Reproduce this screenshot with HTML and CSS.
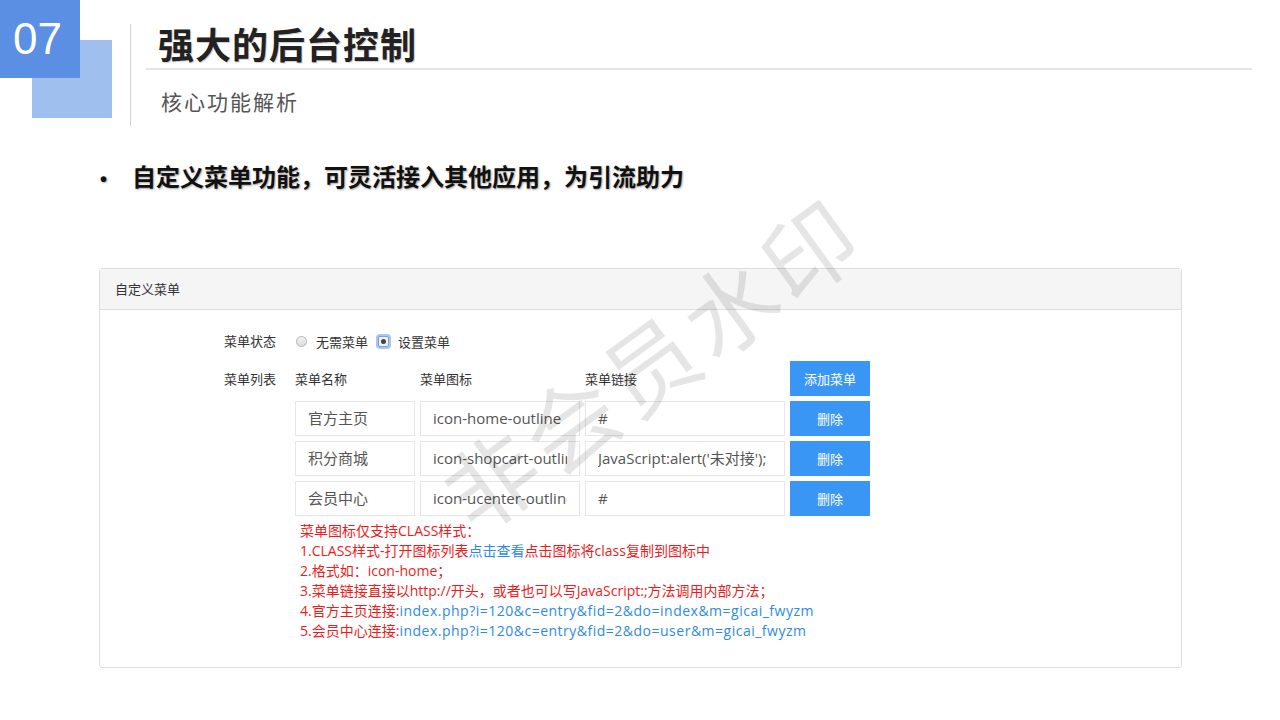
FILE: index.html
```html
<!DOCTYPE html>
<html lang="zh-CN">

<head>
    <meta charset="UTF-8">
    <meta name="viewport" content="width=device-width, initial-scale=1.0">
    <link rel="stylesheet" href="styles.css">
    <title>强大的后台控制</title>
</head>

<body>
    <header class="head">
        <div class="num"><span>07</span></div>
        <div class="vline"></div>
        <div class="titles">
            <h1 class="title">强大的后台控制</h1>
            <p class="sub">核心功能解析</p>
        </div>
    </header>

    <ul class="points">
        <li>自定义菜单功能，可灵活接入其他应用，为引流助力</li>
    </ul>

    <div class="panel">
        <div class="panel-head">自定义菜单</div>
        <div class="panel-body">
            <div class="form-row status">
                <label class="label">菜单状态</label>
                <div class="radios">
                    <span class="radio"></span><span class="radio-text">无需菜单</span>
                    <span class="radio checked"></span><span class="radio-text">设置菜单</span>
                </div>
            </div>

            <div class="form-row">
                <label class="label list-label">菜单列表</label>
                <div class="menu-grid">
                    <div class="col-head">菜单名称</div>
                    <div class="col-head">菜单图标</div>
                    <div class="col-head">菜单链接</div>
                    <button class="btn">添加菜单</button>

                    <div class="field"><span>官方主页</span></div>
                    <div class="field"><span>icon-home-outline</span></div>
                    <div class="field"><span>#</span></div>
                    <button class="btn">删除</button>

                    <div class="field"><span>积分商城</span></div>
                    <div class="field"><span>icon-shopcart-outline</span></div>
                    <div class="field"><span>JavaScript:alert('未对接');</span></div>
                    <button class="btn">删除</button>

                    <div class="field"><span>会员中心</span></div>
                    <div class="field"><span>icon-ucenter-outline</span></div>
                    <div class="field"><span>#</span></div>
                    <button class="btn">删除</button>
                </div>
            </div>

            <div class="notes">
                <p>菜单图标仅支持CLASS样式：</p>
                <p>1.CLASS样式-打开图标列表<a href="#">点击查看</a>点击图标将class复制到图标中</p>
                <p>2.格式如：icon-home；</p>
                <p>3.菜单链接直接以http://开头，或者也可以写JavaScript:;方法调用内部方法；</p>
                <p>4.官方主页连接:<a class="url" href="#">index.php?i=120&amp;c=entry&amp;fid=2&amp;do=index&amp;m=gicai_fwyzm</a></p>
                <p>5.会员中心连接:<a class="url" href="#">index.php?i=120&amp;c=entry&amp;fid=2&amp;do=user&amp;m=gicai_fwyzm</a></p>
            </div>
        </div>
    </div>

    <div class="watermark">非会员水印</div>
</body>

</html>
```

FILE: styles.css
```css
* {
    margin: 0;
    padding: 0;
    box-sizing: border-box;
}

body {
    width: 1280px;
    height: 720px;
    overflow: hidden;
    position: relative;
    background: #fff;
    font-family: "Noto Sans CJK SC", "Noto Sans", sans-serif;
    color: #333;
}

/* header */
.head {
    display: flex;
    align-items: flex-start;
}

.num {
    position: relative;
    width: 112px;
    height: 118px;
    flex-shrink: 0;
}

.num::before {
    content: "";
    position: absolute;
    left: 32px;
    top: 40px;
    width: 80px;
    height: 78px;
    background: #9fbfee;
}

.num span {
    position: absolute;
    left: 0;
    top: 0;
    width: 80px;
    height: 78px;
    background: #5b8fe3;
    color: #fff;
    font-family: "Liberation Sans", Arial, sans-serif;
    font-size: 44px;
    line-height: 78px;
    padding-left: 13px;
}

.vline {
    width: 1px;
    height: 102px;
    margin: 24px 0 0 18px;
    background: #d0d0d0;
}

.titles {
    flex: 1;
    margin: 0 28px 0 15px;
}

.title {
    margin-top: 21px;
    padding: 0 0 3px 12px;
    font-size: 36px;
    line-height: 44px;
    font-weight: bold;
    letter-spacing: 1px;
    color: #222;
    text-shadow: 1px 1px 1px rgba(0, 0, 0, 0.2);
    border-bottom: 2px solid #e4e4e4;
}

.sub {
    margin-top: 17px;
    padding-left: 15px;
    font-size: 21px;
    line-height: 28px;
    letter-spacing: 2px;
    color: #555;
}

/* bullet */
.points {
    list-style: none;
    margin-top: 34px;
    padding-left: 100px;
}

.points li {
    font-size: 24px;
    line-height: 32px;
    font-weight: bold;
    color: #111;
    text-shadow: 1px 1px 2px rgba(0, 0, 0, 0.35);
}

.points li::before {
    content: "•";
    display: inline-block;
    width: 32px;
    font-family: "Liberation Sans", Arial, sans-serif;
    font-size: 20px;
}

/* panel */
.panel {
    margin: 73px 0 0 99px;
    width: 1083px;
    height: 400px;
    border: 1px solid #ddd;
    border-radius: 3px;
}

.panel-head {
    height: 41px;
    line-height: 40px;
    padding-left: 15px;
    font-size: 13px;
    color: #333;
    background: #f5f5f5;
    border-bottom: 1px solid #ddd;
}

.panel-body {
    padding: 21px 0 0 124px;
}

.form-row {
    display: flex;
    font-size: 13px;
}

.label {
    width: 71px;
    flex-shrink: 0;
    line-height: 20px;
    color: #333;
}

.list-label {
    line-height: 35px;
}

.status {
    height: 20px;
    margin-bottom: 10px;
}

.radios {
    display: flex;
    align-items: center;
}

.radio {
    width: 11px;
    height: 11px;
    border-radius: 50%;
    border: 1px solid #b5b5b5;
    background: linear-gradient(#f4f4f4, #dcdcdc);
    margin: 0 9px 0 1px;
}

.radio.checked {
    position: relative;
    margin-left: 10px;
    box-shadow: 0 0 0 2px #a8c6ee;
    border-radius: 2px;
    border-color: #7f9fd0;
    background: #eef3fb;
}

.radio.checked::after {
    content: "";
    position: absolute;
    left: 2px;
    top: 2px;
    width: 5px;
    height: 5px;
    border-radius: 50%;
    background: #444;
}

.radio-text {
    color: #333;
}

.menu-grid {
    display: grid;
    grid-template-columns: 120px 160px 200px 80px;
    grid-auto-rows: 35px;
    gap: 5px;
}

.col-head {
    line-height: 35px;
    color: #333;
}

.field {
    border: 1px solid #e6e6e6;
    padding: 0 12px;
    font-family: "Open Sans", "Noto Sans CJK SC", sans-serif;
    font-size: 15px;
    line-height: 33px;
    color: #555;
}

.field span {
    display: block;
    white-space: nowrap;
    overflow: hidden;
}

.btn {
    border: 0;
    background: #3a96f5;
    color: #fff;
    font-family: "Noto Sans CJK SC", sans-serif;
    font-size: 13px;
}

.notes {
    margin: 5px 0 0 76px;
    font-family: "Open Sans", "Noto Sans CJK SC", sans-serif;
    font-size: 14px;
    line-height: 20px;
    color: #ee1c1c;
}

.notes a {
    color: #2e8ae6;
    text-decoration: none;
}

.notes .url {
    letter-spacing: 0.5px;
}

/* watermark */
.watermark {
    position: absolute;
    left: 650px;
    top: 360px;
    transform: translate(-50%, -50%) rotate(-36deg);
    font-size: 92px;
    letter-spacing: 6px;
    color: rgba(0, 0, 0, 0.1);
    white-space: nowrap;
    pointer-events: none;
}
```
